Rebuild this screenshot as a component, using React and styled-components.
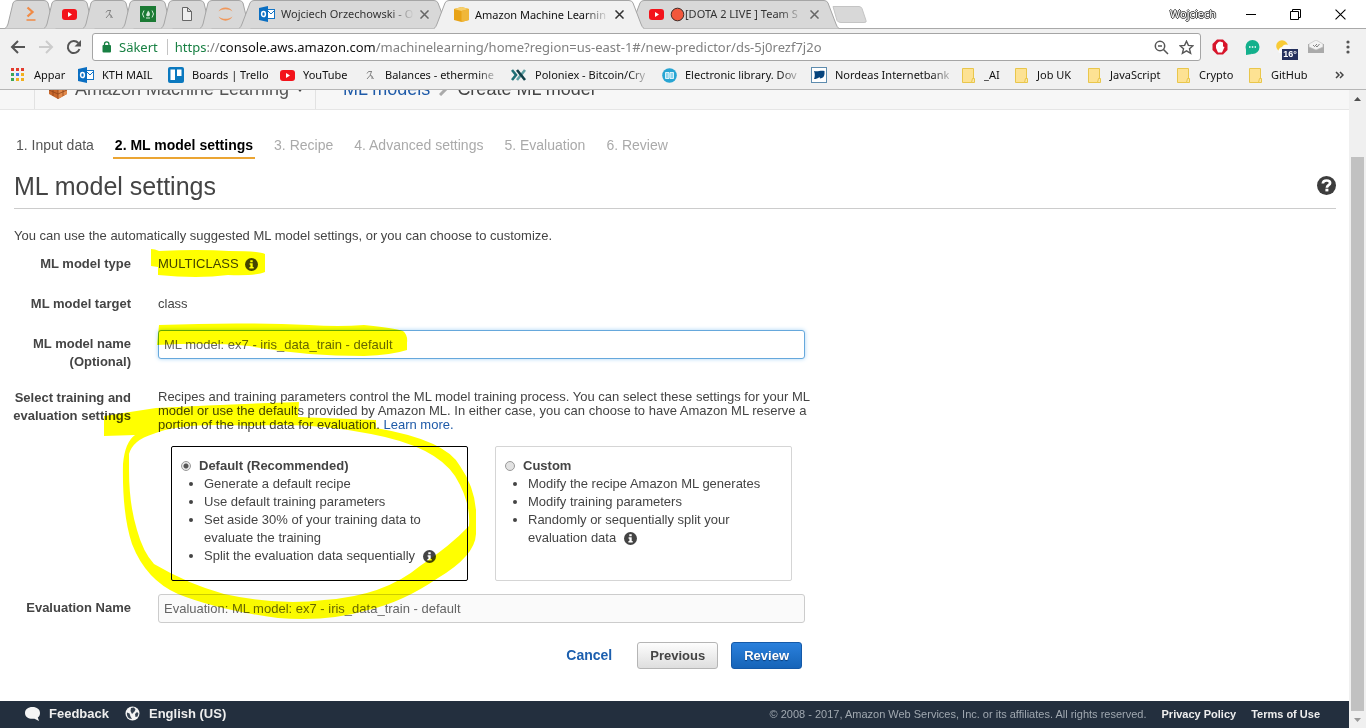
import React from "react";
import styled, { createGlobalStyle, css } from "styled-components";

const Global = createGlobalStyle`
  * { box-sizing: border-box; }
  body { margin: 0; background: #fff; overflow: hidden; }
  svg { display: block; flex: none; }
`;

const ui = `"Noto Sans", "Open Sans", sans-serif`;
const page = `"Liberation Sans", Arial, sans-serif`;

const Window = styled.div`
  display: flex;
  flex-direction: column;
  height: 100vh;
  background: #fff;
`;

/* ---------- browser chrome ---------- */

const TabStrip = styled.header`
  display: flex;
  align-items: flex-end;
  height: 29px;
  border-bottom: 1px solid #a9a9a9;
  padding: 0 3px 0 5px;
  font: 11px/28px ${ui};
`;

const TabShell = styled.div`
  position: relative;
  display: flex;
  align-items: center;
  flex: none;
  width: ${(p) => p.$w}px;
  height: ${(p) => (p.$active ? 29 : 28)}px;
  margin-right: ${(p) => (p.$w < 100 ? -12 : -15)}px;
  margin-bottom: ${(p) => (p.$active ? -1 : 0)}px;
  padding: 0 ${(p) => (p.$w < 100 ? 0 : 20)}px;
  justify-content: ${(p) => (p.$w < 100 ? "center" : "flex-start")};
  gap: 6px;
  color: ${(p) => (p.$active ? "#111" : "#333")};
  z-index: ${(p) => (p.$active ? 2 : 1)};
`;

const TabShape = styled.svg`
  position: absolute;
  left: 0;
  top: 0;
  z-index: -1;
`;

const TabTitle = styled.a`
  display: flex;
  align-items: center;
  flex: 1;
  min-width: 0;
  white-space: nowrap;
  color: inherit;
  text-decoration: none;
  mask-image: linear-gradient(90deg, #000 82%, transparent 100%);
`;

const PlainButton = styled.button`
  display: flex;
  align-items: center;
  justify-content: center;
  flex: none;
  padding: 0;
  border: 0;
  background: none;
  color: inherit;
  font: inherit;
`;

const NewTab = styled(PlainButton)`
  align-self: center;
  margin-left: 8px;
`;

const WindowControls = styled.div`
  display: flex;
  align-items: center;
  height: 28px;
  margin-left: auto;
  color: #000;
`;

const ProfileName = styled(PlainButton)`
  margin-right: 12px;
  color: #fff;
  font: 11px/14px ${ui};
  text-shadow: 1px 0 #444, -1px 0 #444, 0 1px #444, 0 -1px #444;
`;

const ControlButton = styled(PlainButton)`
  width: 45px;
  height: 28px;
`;

const Toolbar = styled.div`
  display: flex;
  align-items: center;
  flex: none;
  height: 36px;
  padding: 0 2px 0 4px;
  background: #f1f1f1;
  color: #555;
`;

const NavButton = styled(PlainButton)`
  width: 28px;
  height: 28px;
`;

const AddressBar = styled.form`
  display: flex;
  align-items: center;
  flex: 1;
  min-width: 0;
  height: 28px;
  margin: 0 3px 0 4px;
  padding: 0 6px 0 9px;
  border: 1px solid #a5a5a5;
  border-radius: 3px;
  background: #fff;
  font: 13px/26px ${ui};
  color: #808080;
`;

const Secure = styled(PlainButton)`
  gap: 7px;
  color: #188043;
  padding-right: 9px;
  height: 16px;
  border-right: 1px solid #c4c4c4;
  margin-right: 7px;
`;

const Url = styled.a`
  flex: 1;
  min-width: 0;
  color: inherit;
  text-decoration: none;
  white-space: nowrap;
  overflow: hidden;
  b { font-weight: 400; color: #111; }
  i { font-style: normal; color: #188043; }
`;

const OmniIcons = styled.div`
  display: flex;
  gap: 10px;
`;

const Extension = styled(PlainButton)`
  width: 32px;
  height: 28px;
`;

const WeatherIcon = styled.span`
  position: relative;
  display: flex;
`;

const Temperature = styled.span`
  position: absolute;
  left: 6px;
  top: 9px;
  width: 16px;
  height: 11px;
  background: #25305c;
  color: #fff;
  font: bold 9px/11px ${page};
  text-align: center;
`;

const BookmarkBar = styled.nav`
  display: flex;
  align-items: center;
  flex: none;
  height: 25px;
  padding: 0 22px 4px 10px;
  background: #f1f1f1;
  border-bottom: 1px solid #b6b6b6;
  font: 11px/20px ${ui};
  color: #111;
`;

const Bookmark = styled.a`
  display: flex;
  align-items: center;
  flex: none;
  width: ${(p) => p.$w}px;
  gap: ${(p) => p.$gap || 8}px;
  color: inherit;
  text-decoration: none;
  white-space: nowrap;
`;

const BookmarkText = styled.span`
  ${(p) => p.$fade && css`mask-image: linear-gradient(90deg, #000 85%, transparent 105%);`}
`;

const Overflow = styled(PlainButton)`
  margin-left: auto;
`;

/* ---------- page ---------- */

const Viewport = styled.div`
  display: flex;
  flex: 1;
  min-height: 0;
`;

const Page = styled.div`
  display: flex;
  flex-direction: column;
  flex: 1;
  min-width: 0;
  font: 13px/18px ${page};
  color: #444;
`;

const ServiceBar = styled.div`
  display: flex;
  align-items: flex-end;
  flex: none;
  height: 20px;
  overflow: hidden;
  background: #f7f7f7;
  border-bottom: 1px solid #e6e6e6;
  font: 18px/40px ${page};
  padding-left: 34px;
`;

const ServiceLink = styled.a`
  display: flex;
  align-items: center;
  height: 40px;
  gap: 7px;
  padding: 0 13px;
  width: 282px;
  border: solid #e2e2e2;
  border-width: 0 1px;
  color: #555;
  text-decoration: none;
  white-space: nowrap;
`;

const Crumbs = styled.div`
  display: flex;
  align-items: center;
  height: 40px;
  gap: 9px;
  padding-left: 27px;
`;

const Link = styled.a`
  color: #1e5aa8;
  text-decoration: none;
`;

const Main = styled.main`
  position: relative;
  flex: 1;
  min-height: 0;
  padding: 25px 13px 0 14px;
`;

const Steps = styled.ol`
  display: flex;
  gap: 17px;
  margin: 0;
  padding: 0;
  list-style: none;
  font-size: 14px;
  line-height: 20px;
`;

const Step = styled.li`
  height: 24px;
  padding: 0 2px;
  color: ${(p) => (p.$state === "active" ? "#000" : p.$state === "done" ? "#555" : "#aaa")};
  font-weight: ${(p) => (p.$state === "active" ? 700 : 400)};
  border-bottom: 2px solid ${(p) => (p.$state === "active" ? "#eba533" : "transparent")};
`;

const TitleRow = styled.div`
  display: flex;
  align-items: center;
  justify-content: space-between;
  height: 50px;
  padding-top: 4px;
  border-bottom: 1px solid #ccc;
`;

const Title = styled.h1`
  margin: 0;
  font: 400 25px/30px ${page};
`;

const Intro = styled.p`
  margin: 18px 0 10px;
`;

const Form = styled.form`
  display: grid;
  grid-template-columns: 117px 647px;
  column-gap: 27px;
`;

const Label = styled.label`
  font-weight: 700;
  text-align: right;
  white-space: nowrap;
  justify-self: end;
  padding-top: ${(p) => p.$pad || 0}px;
`;

const Cell = styled.div`
  height: ${(p) => p.$h}px;
`;

const Inline = styled.span`
  display: flex;
  align-items: center;
  gap: 6px;
`;

const TextInput = styled.input`
  display: block;
  width: 100%;
  height: 29px;
  padding: 0 5px 1px;
  border: 1px solid ${(p) => (p.$focused ? "#66a8dc" : "#ccc")};
  border-radius: 3px;
  background: ${(p) => (p.$focused ? "#fff" : "#fafafa")};
  box-shadow: ${(p) => (p.$focused ? "0 0 4px #a9d4f5" : "none")};
  color: #666;
  font: 13px/18px ${page};
  outline: 0;
`;

const Description = styled.p`
  margin: 0 -12px 14px 0;
  padding-top: 1px;
  line-height: 14px;
`;

const Options = styled.div`
  display: flex;
  gap: 27px;
  padding-left: 13px;
`;

const Option = styled.div`
  width: 297px;
  height: 135px;
  padding: 10px 9px;
  border: 1px solid ${(p) => (p.$selected ? "#000" : "#d5d5d5")};
  border-radius: 2px;
`;

const OptionLabel = styled.label`
  display: flex;
  align-items: center;
  gap: 8px;
  font-weight: 700;
`;

const Radio = styled.input`
  appearance: none;
  width: 10px;
  height: 10px;
  margin: 0;
  border: 1px solid #999;
  border-radius: 50%;
  background: #e2e2e2;
  &:checked { background: radial-gradient(circle, #555 0 2px, #e8e8e8 3px); }
`;

const Bullets = styled.ul`
  margin: 0;
  padding: 0 18px 0 23px;
  svg { display: inline-block; vertical-align: -3px; margin-left: 4px; }
`;

const Actions = styled.div`
  display: flex;
  justify-content: flex-end;
  align-items: center;
  grid-column: 1 / -1;
  padding-right: 3px;
  margin-top: 19px;
`;

const Button = styled.button`
  height: 27px;
  padding: 0 12px;
  margin-left: 13px;
  border: 1px solid ${(p) => (p.$primary ? "#1459a8" : "#b5b5b5")};
  border-radius: 3px;
  background: ${(p) => (p.$primary ? "linear-gradient(#2a80dc, #1664b8)" : "linear-gradient(#fdfdfd, #dedede)")};
  color: ${(p) => (p.$primary ? "#fff" : "#444")};
  text-shadow: ${(p) => (p.$primary ? "0 1px 1px #0a3c78" : "none")};
  font: 700 13px/18px ${page};
`;

const TextButton = styled(PlainButton)`
  color: #1c5fae;
  font-weight: 700;
  font-size: 14px;
  margin-right: 12px;
  padding-bottom: 2px;
`;

const Marker = styled.svg`
  position: absolute;
  left: 0;
  top: 0;
  pointer-events: none;
  mix-blend-mode: multiply;
`;

const Footer = styled.footer`
  display: flex;
  align-items: center;
  flex: none;
  height: 27px;
  padding: 0 29px 2px 25px;
  background: #232f3e;
  color: #fff;
  font: 11px/16px ${page};
`;

const FooterLink = styled.a`
  display: flex;
  align-items: center;
  gap: 9px;
  margin-right: 16px;
  color: #eee;
  font-weight: 700;
  font-size: 13px;
  text-decoration: none;
`;

const Legal = styled.div`
  display: flex;
  gap: 15px;
  margin-left: auto;
  color: #a0a8b0;
`;

const LegalLink = styled.a`
  color: #eee;
  font-weight: 700;
  text-decoration: none;
`;

const Scrollbar = styled.div`
  display: flex;
  flex-direction: column;
  align-items: center;
  justify-content: space-between;
  width: 17px;
  background: #f0f0f0;
`;

const ScrollButton = styled(PlainButton)`
  width: 17px;
  height: 17px;
`;

const Track = styled.div`
  flex: 1;
  width: 13px;
  padding-top: 50px;
`;

const Thumb = styled.div`
  height: 100%;
  background: #c1c1c1;
`;

/* ---------- icons ---------- */

const Info = () => (
  <svg width="13" height="13" viewBox="0 0 13 13">
    <circle cx="6.5" cy="6.5" r="6.5" fill="#444" />
    <path d="M5.3 2.2h2.4v2H5.3zM4.6 5.2h3.1v3.800h1v1.500H4.400V9h1V6.700h-.8z" fill="#fff" />
  </svg>
);

const Help = () => (
  <svg width="19" height="19" viewBox="0 0 19 19">
    <circle cx="9.500" cy="9.500" r="9.500" fill="#3d3d3d" />
    <path d="M5.800 7.500C6 5.200 7.500 4.500 9.600 4.500c2.200 0 3.500.9 3.500 2.500 0 2.300-3.200 2.100-3.200 4.700" fill="none" stroke="#fff" strokeWidth="2.700" />
    <path d="M8.400 12.700h3v2.700h-3z" fill="#fff" />
  </svg>
);

const YouTube = () => (
  <svg width="15" height="15" viewBox="0 0 15 15">
    <rect y="2" width="15" height="11" rx="3" fill="#f3131b" />
    <path d="M6 5l4 2.500-4 2.500z" fill="#fff" />
  </svg>
);

const Outlook = () => (
  <svg width="16" height="16" viewBox="0 0 16 16">
    <rect x="8" y="3.500" width="7.500" height="9" fill="#fff" stroke="#1474c4" />
    <path d="M9 5l3 3 3.500-3.500" fill="none" stroke="#1474c4" />
    <path d="M0 2l9-2v16l-9-2z" fill="#0b6fc2" />
    <ellipse cx="4.500" cy="8" rx="1.900" ry="2.600" fill="none" stroke="#fff" strokeWidth="1.500" />
  </svg>
);

const Miner = () => (
  <svg width="14" height="14" viewBox="0 0 14 14" fill="none" stroke="#858585">
    <path d="M4 5.500l1.500-2h3.500M4 11l3-3.500M8.500 3.500L7 7.500l2 .5v3M9 8.500l1.500 2.500" />
  </svg>
);

const Prompt = () => (
  <svg width="14" height="16" viewBox="0 0 14 16" fill="none" stroke="#f08a45">
    <path d="M3.500 1.500L8.500 6l-5 4.500" strokeWidth="2.300" />
    <path d="M2.500 14h9" strokeWidth="1.500" />
  </svg>
);

const CampIcon = () => (
  <svg width="16" height="16" viewBox="0 0 16 16">
    <rect width="16" height="16" fill="#1b7a34" />
    <path d="M4 4.500q-3 3.500 0 7M12 4.500q3 3.500 0 7M6 12h4" fill="none" stroke="#d5ead9" />
    <path d="M8 4.500c1.800 1.800 2.300 3 1.800 4.700-.5 1.300-3.100 1.300-3.600 0C6 8 7.500 7 8 4.500z" fill="#d5ead9" />
  </svg>
);

const FileIcon = () => (
  <svg width="12" height="14" viewBox="0 0 12 14" fill="#eee" stroke="#666">
    <path d="M1.500.5h5l4 4v9h-9zM6.500.5v4h4" />
  </svg>
);

const Jupyter = () => (
  <svg width="18" height="16" viewBox="0 0 18 16" fill="#f0975a">
    <path d="M1.500 5.500C4 0 13 0 15.500 5.500 12 2.400 5 2.400 1.500 5.500zM1.500 10.500c2.500 5.500 11.500 5.500 14 0-3.500 3.100-10.500 3.100-14 0z" />
  </svg>
);

const Cube = () => (
  <svg width="15" height="15" viewBox="0 0 15 15">
    <path d="M0 2l7.500-2L15 2v11l-7.500 2L0 13z" fill="#e8a317" />
    <path d="M0 2l7.500 2L15 2 7.500 0z" fill="#f7cf6b" />
    <path d="M7.500 4v11L15 13V2z" fill="#f0b73a" />
  </svg>
);

const AppsIcon = () => (
  <svg width="14" height="14" viewBox="0 0 14 14">
    {["#e33b2e", "#e33b2e", "#e33b2e", "#3ba757", "#3f7fe8", "#f2b01e", "#3ba757", "#f2b01e", "#f2b01e"].map((c, i) => (
      <rect key={i} x={(i % 3) * 5 + 1} y={Math.floor(i / 3) * 5} width="3" height="3" fill={c} />
    ))}
  </svg>
);

const Trello = () => (
  <svg width="16" height="16" viewBox="0 0 16 16">
    <rect width="16" height="16" rx="2" fill="#0b79bf" />
    <path d="M2.500 2.500h4.500v10.500H2.500zM9 2.500h4.500v6.500H9z" fill="#fff" />
  </svg>
);

const Poloniex = () => (
  <svg width="16" height="14" viewBox="0 0 16 14" fill="none" strokeWidth="2.600">
    <path d="M1 2l4 5-4 5" stroke="#1f6f75" />
    <path d="M14 2L6 12" stroke="#5d9ea2" />
    <path d="M6 2l8 10" stroke="#113f47" />
  </svg>
);

const Library = () => (
  <svg width="15" height="15" viewBox="0 0 15 15">
    <circle cx="7.500" cy="7.500" r="7.300" fill="#27a5d3" />
    <path d="M3.500 4.500h3.500v6H3.500zM8 4.500h3.500v6H8z" fill="#8fd6ee" stroke="#fff" strokeWidth=".8" />
  </svg>
);

const Nordea = () => (
  <svg width="16" height="16" viewBox="0 0 16 16">
    <rect x=".5" y=".5" width="15" height="15" fill="#fff" stroke="#5e8cae" />
    <path d="M3 4c4 1.200 6-1 10.500 0v3c-.5 3-1.500 4-4.500 4.500L8.500 10c-2 1.500-3 2-5.500 2 1.200-2.500 1-5.500 0-8z" fill="#07457e" />
  </svg>
);

const Folder = () => (
  <svg width="13" height="15" viewBox="0 0 13 15" stroke="#e9c64b">
    <path d="M.5.5h11v14H.5z" fill="#fde293" />
    <path d="M12.500 14.500h-3l1-4h2z" fill="#fbe7a5" />
  </svg>
);

const Arrow = ({ c = "#555", flip }) => (
  <svg width="16" height="16" viewBox="0 0 16 16" fill="none" stroke={c} strokeWidth="2">
    <path d={flip ? "M1 8h12M8 2l6 6-6 6" : "M15 8H3M8 2L2 8l6 6"} />
  </svg>
);

const Reload = () => (
  <svg width="16" height="16" viewBox="0 0 16 16">
    <path d="M13.500 10A6 6 0 1 1 12.300 4" fill="none" stroke="#555" strokeWidth="2" />
    <path d="M15 1v6.500H8.500z" fill="#555" />
  </svg>
);

const Lock = () => (
  <svg width="10" height="12" viewBox="0 0 10 12">
    <rect x=".5" y="4" width="8.500" height="7.500" rx="1" fill="#188043" />
    <path d="M2.500 5V3a2.200 2.200 0 0 1 4.400 0v2" fill="none" stroke="#188043" strokeWidth="1.300" />
  </svg>
);

const ZoomOut = () => (
  <svg width="15" height="15" viewBox="0 0 15 15" fill="none" stroke="#555" strokeWidth="1.500">
    <circle cx="6" cy="6" r="4.700" />
    <path d="M9.500 9.500l4.500 4.500M4 6h4" />
  </svg>
);

const Star = () => (
  <svg width="15" height="15" viewBox="0 0 15 15" fill="none" stroke="#555" strokeWidth="1.400">
    <path d="M7.500 1.200l1.900 4.200 4.600.4-3.500 3 1.100 4.500-4.100-2.500-4.100 2.500 1.100-4.500-3.500-3 4.600-.4z" />
  </svg>
);

const Adblock = () => (
  <svg width="16" height="16" viewBox="0 0 16 16">
    <path d="M5 .5h6L15.500 5v6L11 15.500H5L.5 11V5z" fill="#d7152b" />
    <path d="M4 6v3l2 4.500h4L12.500 8 11 7.500V3.500L9.500 3 8 2.500 6.500 3l-1 1z" fill="#fff" />
  </svg>
);

const Chat = () => (
  <svg width="15" height="15" viewBox="0 0 15 15">
    <circle cx="7.500" cy="7" r="7" fill="#13b08c" />
    <path d="M1 9v6l6-1z" fill="#13b08c" />
    <path d="M4 7h1.500M6.800 7h1.500M9.600 7H11" stroke="#fff" strokeWidth="1.300" />
  </svg>
);

const Weather = () => (
  <svg width="16" height="14" viewBox="0 0 16 14">
    <circle cx="6" cy="6" r="5.800" fill="#f8cb36" />
    <path d="M3 13a4 4 0 0 1 3-6 5 5 0 0 1 9 1v5z" fill="#fafafa" />
  </svg>
);

const Mail = () => (
  <svg width="16" height="14" viewBox="0 0 16 14">
    <path d="M0 4h16v9H0z" fill="#aaa" />
    <path d="M1 4l7-4 7 4v3l-7 3-7-3z" fill="#f3f3f3" stroke="#bbb" strokeWidth=".6" />
    <path d="M5 5l1.500 1.500L9 4M8 6l1 1 2.500-3" fill="none" stroke="#666" strokeWidth=".8" />
  </svg>
);

const Dots = () => (
  <svg width="4" height="14" viewBox="0 0 4 14" fill="#555">
    <circle cx="2" cy="2" r="1.600" /><circle cx="2" cy="7" r="1.600" /><circle cx="2" cy="12" r="1.600" />
  </svg>
);

const Close = ({ s = 9, w = 1.7, c = "#555" }) => (
  <svg width={s} height={s} viewBox="0 0 10 10" fill="none" stroke={c} strokeWidth={w}>
    <path d="M.5.5l9 9M9.500.5l-9 9" />
  </svg>
);

const Chevrons = () => (
  <svg width="9" height="8" viewBox="0 0 9 8" fill="none" stroke="#444" strokeWidth="1.500">
    <path d="M1 1l3 3-3 3M5 1l3 3-3 3" />
  </svg>
);

const LiveDot = () => (
  <svg width="15" height="15" viewBox="0 0 15 15">
    <circle cx="7.500" cy="7.500" r="6.300" fill="#f2573c" stroke="#3d2a26" />
  </svg>
);

const Boxes = () => (
  <svg width="20" height="20" viewBox="0 0 20 20">
    <path d="M1 4l9-4 9 4v11l-9 5-9-5z" fill="#c8682c" />
    <path d="M10 9l9-4v10l-9 5z" fill="#e28a4c" />
    <path d="M5 7v10M10 8v12M15 7v10M1 11l9 4 9-4" fill="none" stroke="#8f451a" strokeWidth=".8" />
  </svg>
);

const Bubble = () => (
  <svg width="15" height="14" viewBox="0 0 15 14">
    <path d="M7.500 0C12 0 15 2.500 15 6c0 2-.8 3.500-2.200 4.500L14 14l-4.500-2.300C4 12.500 0 10 0 6 0 2.500 3 0 7.500 0z" fill="#f4f4f4" />
  </svg>
);

const Globe = () => (
  <svg width="15" height="15" viewBox="0 0 15 15">
    <circle cx="7.500" cy="7.500" r="7" fill="#f4f4f4" />
    <path d="M2 6.500l2.500 1 1 3 1.500 2.500-2.500-.5C2.500 11.500 1.500 9 2 6.500zM6 2l3-.5 1.500 2-1 2L7 8 5.500 5zM10 8l2-2 1.500 1.500-1 3-2 .5z" fill="#35414f" />
  </svg>
);

/* ---------- composed parts ---------- */

function Tab({ w, active, icon, lead, title }) {
  const slope = w < 100 ? 12 : 15;
  return (
    <TabShell $w={w} $active={active}>
      <TabShape width={w} height="29" viewBox={`0 0 ${w} 29`}>
        <path
          d={`M0 28.500Q2 27 3 24L${slope - 4} 3Q${slope - 3} .5 ${slope} .5H${w - slope}Q${w - slope + 3} .5 ${w - slope + 4} 3L${w - 3} 24Q${w - 2} 27 ${w} 28.500`}
          fill={active ? "#f1f1f1" : "#d8d8d8"}
          stroke="#a5a5a5"
        />
        {active && <path d={`M1 28.500H${w - 1}`} stroke="#f1f1f1" />}
      </TabShape>
      {icon}
      {title && <TabTitle href="#">{lead}{title}</TabTitle>}
      {title && <PlainButton aria-label="Close tab"><Close c={active ? "#333" : "#666"} /></PlainButton>}
    </TabShell>
  );
}

const pinned = [<Prompt />, <YouTube />, <Miner />, <CampIcon />, <FileIcon />, <Jupyter />];

const bookmarks = [
  { w: 68, icon: <AppsIcon />, text: "Appar", gap: 10 },
  { w: 90, icon: <Outlook />, text: "KTH MAIL" },
  { w: 112, icon: <Trello />, text: "Boards | Trello" },
  { w: 83, icon: <YouTube />, text: "YouTube" },
  { w: 148, icon: <Miner />, text: "Balances - ethermine", fade: true },
  { w: 151, icon: <Poloniex />, text: "Poloniex - Bitcoin/Cry", fade: true },
  { w: 149, icon: <Library />, text: "Electronic library. Dov", fade: true },
  { w: 151, icon: <Nordea />, text: "Nordeas Internetbank", fade: true },
  { w: 53, icon: <Folder />, text: "_AI", gap: 9 },
  { w: 73, icon: <Folder />, text: "Job UK", gap: 9 },
  { w: 89, icon: <Folder />, text: "JavaScript", gap: 9 },
  { w: 72, icon: <Folder />, text: "Crypto", gap: 9 },
  { w: 60, icon: <Folder />, text: "GitHub", gap: 9 },
];

const steps = [
  ["1. Input data", "done"],
  ["2. ML model settings", "active"],
  ["3. Recipe"],
  ["4. Advanced settings"],
  ["5. Evaluation"],
  ["6. Review"],
];

export default function App() {
  return (
    <Window>
      <Global />
      <TabStrip>
        {pinned.map((icon, i) => <Tab key={i} w={51} icon={icon} />)}
        <Tab w={210} icon={<Outlook />} title="Wojciech Orzechowski - O" />
        <Tab w={210} active icon={<Cube />} title="Amazon Machine Learnin" />
        <Tab w={210} icon={<YouTube />} lead={<LiveDot />} title="[DOTA 2 LIVE ] Team S" />
        <NewTab aria-label="New tab">
          <svg width="36" height="17" viewBox="0 0 36 17">
            <path d="M1 .5h26q2 0 3 2l4 12q1 2-2 2H9q-3 0-4-2z" fill="#d8d8d8" stroke="#c4c4c4" />
          </svg>
        </NewTab>
        <WindowControls>
          <ProfileName>Wojciech</ProfileName>
          <ControlButton aria-label="Minimize"><svg width="10" height="10"><path d="M0 5.500h10" stroke="#000" /></svg></ControlButton>
          <ControlButton aria-label="Restore">
            <svg width="11" height="11" fill="none" stroke="#000"><path d="M.5 2.500h8v8h-8zM2.500 2.500v-2h8v8h-2" /></svg>
          </ControlButton>
          <ControlButton aria-label="Close"><Close s={11} w={1} c="#000" /></ControlButton>
        </WindowControls>
      </TabStrip>
      <Toolbar>
        <NavButton aria-label="Back"><Arrow /></NavButton>
        <NavButton aria-label="Forward"><Arrow flip c="#ccc" /></NavButton>
        <NavButton aria-label="Reload"><Reload /></NavButton>
        <AddressBar>
          <Secure type="button"><Lock />Säkert</Secure>
          <Url href="#"><i>https</i>://<b>console.aws.amazon.com</b>/machinelearning/home?region=us-east-1#/new-predictor/ds-5j0rezf7j2o</Url>
          <OmniIcons>
            <PlainButton type="button" aria-label="Zoom"><ZoomOut /></PlainButton>
            <PlainButton type="button" aria-label="Bookmark"><Star /></PlainButton>
          </OmniIcons>
        </AddressBar>
        <Extension aria-label="Ad blocker"><Adblock /></Extension>
        <Extension aria-label="Chat"><Chat /></Extension>
        <Extension aria-label="Weather"><WeatherIcon><Weather /><Temperature>16°</Temperature></WeatherIcon></Extension>
        <Extension aria-label="Mail"><Mail /></Extension>
        <Extension aria-label="Menu"><Dots /></Extension>
      </Toolbar>
      <BookmarkBar>
        {bookmarks.map((b) => (
          <Bookmark key={b.text} href="#" $w={b.w} $gap={b.gap}>
            {b.icon}
            <BookmarkText $fade={b.fade}>{b.text}</BookmarkText>
          </Bookmark>
        ))}
        <Overflow aria-label="More bookmarks"><Chevrons /></Overflow>
      </BookmarkBar>

      <Viewport>
        <Page>
          <ServiceBar>
            <ServiceLink href="#">
              <Boxes />
              Amazon Machine Learning
              <svg width="8" height="5"><path d="M0 0h8L4 5z" fill="#444" /></svg>
            </ServiceLink>
            <Crumbs>
              <Link href="#">ML models</Link>
              <svg width="9" height="14" fill="none" stroke="#aaa" strokeWidth="3"><path d="M1 1l6 6-6 6" /></svg>
              <span>Create ML model</span>
            </Crumbs>
          </ServiceBar>
          <Main>
            <Steps>
              {steps.map(([text, state]) => <Step key={text} $state={state}>{text}</Step>)}
            </Steps>
            <TitleRow>
              <Title>ML model settings</Title>
              <PlainButton aria-label="Help"><Help /></PlainButton>
            </TitleRow>
            <Intro>You can use the automatically suggested ML model settings, or you can choose to customize.</Intro>
            <Form>
              <Label as="span">ML model type</Label>
              <Cell $h={40}><Inline>MULTICLASS <Info /></Inline></Cell>
              <Label as="span">ML model target</Label>
              <Cell $h={35}>class</Cell>
              <Label htmlFor="name" $pad={5}>ML model name<br />(Optional)</Label>
              <Cell $h={59}><TextInput id="name" $focused defaultValue="ML model: ex7 - iris_data_train - default" /></Cell>
              <Label as="span">Select training and<br />evaluation settings</Label>
              <Cell $h={205}>
                <Description>
                  Recipes and training parameters control the ML model training process. You can select these settings for your ML model or use the defaults provided by Amazon ML. In either case, you can choose to have Amazon ML reserve a portion of the input data for evaluation. <Link href="#">Learn more.</Link>
                </Description>
                <Options>
                  <Option $selected>
                    <OptionLabel><Radio type="radio" name="mode" defaultChecked />Default (Recommended)</OptionLabel>
                    <Bullets>
                      <li>Generate a default recipe</li>
                      <li>Use default training parameters</li>
                      <li>Set aside 30% of your training data to<br />evaluate the training</li>
                      <li>Split the evaluation data sequentially <Info /></li>
                    </Bullets>
                  </Option>
                  <Option>
                    <OptionLabel><Radio type="radio" name="mode" />Custom</OptionLabel>
                    <Bullets>
                      <li>Modify the recipe Amazon ML generates</li>
                      <li>Modify training parameters</li>
                      <li>Randomly or sequentially split your<br />evaluation data <Info /></li>
                    </Bullets>
                  </Option>
                </Options>
              </Cell>
              <Label htmlFor="evaluation" $pad={5}>Evaluation Name</Label>
              <TextInput id="evaluation" defaultValue="Evaluation: ML model: ex7 - iris_data_train - default" />
              <Actions>
                <TextButton type="button">Cancel</TextButton>
                <Button type="button">Previous</Button>
                <Button type="button" $primary>Review</Button>
              </Actions>
            </Form>
            <Marker width="500" height="520" viewBox="0 110 500 520" fill="#ff0">
              <path d="M151 249q4 0 8 2 40-2 70 0 30 0 36 3v18q-8 4-37 3-30 4-70 0v-8l-7-1z" />
              <path d="M159 325q80-3 150 0 30 2 55 0 30 3 39 6 5 4 4 12v7q-15 5-43 6-60 0-115-10-40-4-92-1z" />
              <path d="M104 416l52-8q80-4 143-6l-1 15 78 3v8q70 12 84 38 14 20 16 44v24q-1 22-38 44-35 24-70 32-40 12-90 8-60-8-100-24-32-14-46-50-10-30-9-80 2-22 12-29l-31 1z M129 470q0 34 8 60 6 22 17 34 34 20 70 30 55 12 100 6 60-4 96-34 30-20 49-40 2-24-14-50-20-30-84-42-60-12-120-8-70-4-98 8-20 6-24 20z" fillRule="evenodd" />
            </Marker>
          </Main>
          <Footer>
            <FooterLink href="#"><Bubble />Feedback</FooterLink>
            <FooterLink href="#"><Globe />English (US)</FooterLink>
            <Legal>
              <span>© 2008 - 2017, Amazon Web Services, Inc. or its affiliates. All rights reserved.</span>
              <LegalLink href="#">Privacy Policy</LegalLink>
              <LegalLink href="#">Terms of Use</LegalLink>
            </Legal>
          </Footer>
        </Page>
        <Scrollbar>
          <ScrollButton aria-label="Scroll up"><svg width="7" height="4"><path d="M0 4l3.500-4L7 4z" fill="#505050" /></svg></ScrollButton>
          <Track><Thumb /></Track>
          <ScrollButton aria-label="Scroll down"><svg width="7" height="4"><path d="M0 0l3.500 4L7 0z" fill="#999" /></svg></ScrollButton>
        </Scrollbar>
      </Viewport>
    </Window>
  );
}
